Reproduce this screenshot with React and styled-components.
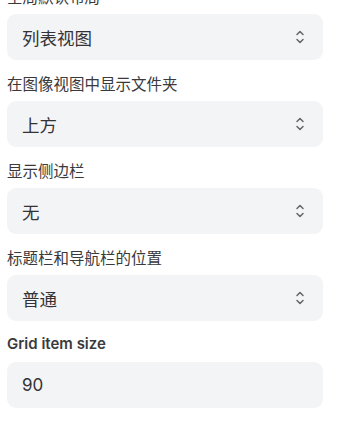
import React from "react";
import styled, { createGlobalStyle } from "styled-components";

const Global = createGlobalStyle`
  html, body { margin: 0; padding: 0; background: #ffffff; overflow: hidden; }
  body { font-family: Inter, "Noto Sans CJK SC", "Noto Sans", sans-serif; }
`;

const Page = styled.div`
  display: flex;
  flex-direction: column;
  padding: 0 19px 0 7px;
  margin-top: -15px;
`;

const Field = styled.div`
  display: flex;
  flex-direction: column;
  gap: 7px;
  margin-bottom: 12px;
`;

const Label = styled.div`
  height: 22px;
  line-height: 22px;
  font-size: ${(p) => (p.$latin ? "15px" : "15.5px")};
  font-weight: ${(p) => (p.$latin ? 600 : 400)};
  color: #3a3a3c;
  font-family: ${(p) => (p.$latin ? "Inter, sans-serif" : `"Noto Sans CJK SC", sans-serif`)};
  white-space: nowrap;
`;

const Box = styled.div`
  height: 46px;
  box-sizing: border-box;
  border-radius: 9px;
  background: #f3f4f6;
  display: flex;
  align-items: center;
  justify-content: space-between;
  padding: 0 18px 0 15px;
`;

const Value = styled.span`
  font-size: ${(p) => (p.$latin ? "17px" : "17.5px")};
  color: #333336;
  font-family: ${(p) => (p.$latin ? "Inter, sans-serif" : `"Noto Sans CJK SC", sans-serif`)};
`;

const Chevron = () => (
  <svg width="10" height="16" viewBox="0 0 10 16" fill="none" stroke="#66666a" strokeWidth="1.5" strokeLinecap="round" strokeLinejoin="round">
    <path d="M2 5.5 L5 2.5 L8 5.5" />
    <path d="M2 10.5 L5 13.5 L8 10.5" />
  </svg>
);

const fields = [
  { label: "全局默认布局", value: "列表视图", select: true },
  { label: "在图像视图中显示文件夹", value: "上方", select: true },
  { label: "显示侧边栏", value: "无", select: true },
  { label: "标题栏和导航栏的位置", value: "普通", select: true },
  { label: "Grid item size", value: "90", select: false, latin: true },
];

export default function App() {
  return (
    <>
      <Global />
      <Page>
        {fields.map((f) => (
          <Field key={f.label}>
            <Label $latin={f.latin}>{f.label}</Label>
            <Box>
              <Value $latin={f.latin}>{f.value}</Value>
              {f.select && <Chevron />}
            </Box>
          </Field>
        ))}
        <Field>
          <Label>显示文件扩展名</Label>
        </Field>
      </Page>
    </>
  );
}
